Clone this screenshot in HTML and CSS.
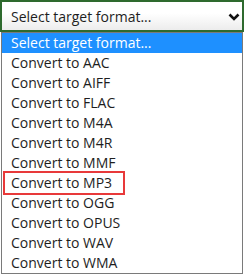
FILE: index.html
```html
<!DOCTYPE html>
<html lang="en">
  <head>
    <meta charset="UTF-8" />
    <meta name="viewport" content="width=device-width, initial-scale=1.0" />
    <title>Audio Converter</title>
    <link rel="stylesheet" href="styles.css">
  </head>
  <body>
    <div class="format-bar">
      <div class="format-select">
        <span>Select target format...</span>
        <svg class="chevron" width="12" height="8" viewBox="0 0 12 8">
          <polyline points="1.5,1.5 6,6 10.5,1.5" fill="none" stroke="#111" stroke-width="2.6" />
        </svg>
      </div>
    </div>

    <!-- opened option list -->
    <ul class="format-list">
      <li class="selected">Select target format...</li>
      <li>Convert to AAC</li>
      <li>Convert to AIFF</li>
      <li>Convert to FLAC</li>
      <li>Convert to M4A</li>
      <li>Convert to M4R</li>
      <li>Convert to MMF</li>
      <li><span class="marked">Convert to MP3</span></li>
      <li>Convert to OGG</li>
      <li>Convert to OPUS</li>
      <li>Convert to WAV</li>
      <li>Convert to WMA</li>
    </ul>

    <p class="page-text">needs, for example, a GIF image for your</p>
  </body>
</html>
```

FILE: styles.css
```css
body {
  font-family: "Open Sans", Arial, sans-serif;
  background-color: #fff;
  margin: 0;
  padding: 0;
  width: 244px;
  height: 276px;
  overflow: hidden;
  color: #1e1e1e;
}

.format-bar {
  background-color: #2e6a2e;
  padding: 2px;
}

.format-select {
  display: flex;
  align-items: center;
  justify-content: space-between;
  height: 28px;
  padding: 0 2px 0 9px;
  background: linear-gradient(#fff 40%, #ececec);
  font-size: 14px;
}

.chevron {
  display: block;
  margin-top: 1px;
}

.format-list {
  list-style: none;
  margin: 0 1px;
  padding: 0;
  border: 1px solid #7a7a7a;
  background-color: #fff;
}

.format-list li {
  height: 20px;
  line-height: 20px;
  padding: 0 8px 0 9px;
  font-size: 14px;
  white-space: nowrap;
}

.format-list li.selected {
  background-color: #1e90ff;
  color: #fff;
}

.marked {
  display: inline-block;
  padding: 0 11px 0 6px;
  margin: 0 -11px 0 -6px;
  line-height: 20px;
  outline: 2px solid #e8393a;
}

.page-text {
  margin: 0;
  padding-left: 6px;
  font-size: 14px;
  line-height: 18px;
  color: #333;
}
```
